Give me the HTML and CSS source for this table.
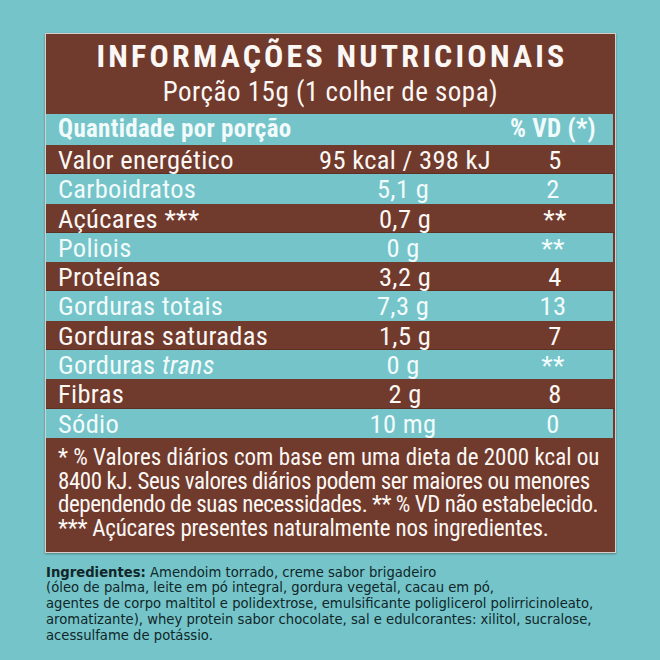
FILE: index.html
```html
<!DOCTYPE html>
<html lang="pt-BR">
<head>
<meta charset="utf-8">
<title>Informações nutricionais</title>
<link rel="stylesheet" href="styles.css">
</head>
<body>
<main class="page">
  <section class="panel">
    <header class="panel-head">
      <h1 class="title">INFORMAÇÕES NUTRICIONAIS</h1>
      <p class="serving">Porção 15g (1 colher de sopa)</p>
    </header>
    <div class="row row-head">
      <span class="label">Quantidade por porção</span>
      <span class="value"></span>
      <span class="vd">% VD (*)</span>
    </div>
    <div class="row dark"><span class="label">Valor energético</span><span class="value">95 kcal / 398 kJ</span><span class="vd">5</span></div>
    <div class="row light"><span class="label">Carboidratos</span><span class="value">5,1 g</span><span class="vd">2</span></div>
    <div class="row dark"><span class="label">Açúcares ***</span><span class="value">0,7 g</span><span class="vd">**</span></div>
    <div class="row light"><span class="label">Poliois</span><span class="value">0 g</span><span class="vd">**</span></div>
    <div class="row dark"><span class="label">Proteínas</span><span class="value">3,2 g</span><span class="vd">4</span></div>
    <div class="row light"><span class="label">Gorduras totais</span><span class="value">7,3 g</span><span class="vd">13</span></div>
    <div class="row dark"><span class="label">Gorduras saturadas</span><span class="value">1,5 g</span><span class="vd">7</span></div>
    <div class="row light"><span class="label">Gorduras <em>trans</em></span><span class="value">0 g</span><span class="vd">**</span></div>
    <div class="row dark"><span class="label">Fibras</span><span class="value">2 g</span><span class="vd">8</span></div>
    <div class="row light"><span class="label">Sódio</span><span class="value">10 mg</span><span class="vd">0</span></div>
    <div class="notes">
      <span class="note-line">* % Valores diários com base em uma dieta de 2000 kcal ou</span>
      <span class="note-line tight">8400 kJ. Seus valores diários podem ser maiores ou menores</span>
      <span class="note-line tight">dependendo de suas necessidades. ** % VD não estabelecido.</span>
      <span class="note-line last">*** Açúcares presentes naturalmente nos ingredientes.</span>
    </div>
  </section>
  <p class="ingredients"><strong>Ingredientes:</strong> Amendoim torrado, creme sabor brigadeiro<br>(óleo de palma, leite em pó integral, gordura vegetal, cacau em pó,<br>agentes de corpo maltitol e polidextrose, emulsificante poliglicerol polirricinoleato,<br>aromatizante), whey protein sabor chocolate, sal e edulcorantes: xilitol, sucralose,<br>acessulfame de potássio.</p>
</main>
</body>
</html>
```
FILE: styles.css
```css
html, body {
  margin: 0;
  padding: 0;
  background: #74c4c9;
}
.page {
  width: 660px;
  height: 660px;
  padding: 33px 0 0 45px;
  box-sizing: border-box;
  overflow: hidden;
}
.panel {
  width: 571px;
  box-sizing: border-box;
  border: 1px solid #d9cec7;
  background: #703a2c;
  box-shadow: 0 1px 2px rgba(0, 0, 0, 0.35);
  font-family: "Roboto Condensed", "Roboto", sans-serif;
  color: #fbf7f4;
}
.panel-head {
  height: 80px;
  box-sizing: border-box;
  padding-top: 2px;
  text-align: center;
}
.title {
  margin: 0;
  font-size: 32px;
  font-weight: 700;
  line-height: 40px;
  letter-spacing: 3.2px;
  padding-left: 3px;
}
.serving {
  margin: 0;
  font-size: 27px;
  font-weight: 400;
  line-height: 32px;
  letter-spacing: 0.5px;
}
.row {
  display: grid;
  grid-template-columns: 1fr 180px 120px;
  padding-left: 12px;
  height: 29.3px;
  font-size: 26.5px;
  line-height: 29.3px;
  letter-spacing: 0.3px;
  white-space: nowrap;
}
.row .value,
.row .vd {
  text-align: center;
}
.row-head {
  height: 31px;
  line-height: 30px;
  font-size: 25px;
  font-weight: 700;
  background: #74c4c9;
  color: #f2fbfb;
  margin-right: 2px;
}
.dark {
  background: #703a2c;
  box-shadow: inset 0 -1px 0 #5e2f23;
}
.light {
  background: #74c4c9;
  color: #f2fbfb;
  margin-right: 2px;
}
.row em {
  font-style: italic;
}
.notes {
  padding: 8px 0 11px 12px;
  font-size: 23px;
  line-height: 23.7px;
  white-space: nowrap;
}
.note-line {
  display: block;
  height: 23.7px;
}
.note-line.tight {
  letter-spacing: -0.45px;
}
.note-line.last {
  letter-spacing: -0.2px;
}
.ingredients {
  margin: 12px 0 0 1px;
  font-family: "DejaVu Sans", sans-serif;
  font-size: 13.2px;
  line-height: 15.7px;
  color: #112628;
  white-space: nowrap;
}
.ingredients strong {
  font-weight: 700;
}
```
